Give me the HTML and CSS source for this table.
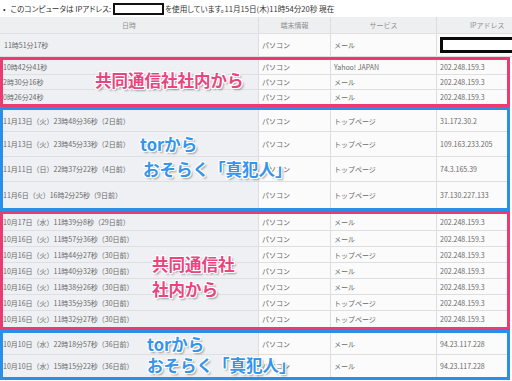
FILE: index.html
```html
<!DOCTYPE html>
<html lang="ja">
<head>
<meta charset="utf-8">
<title>アクセス履歴</title>
<link rel="stylesheet" href="styles.css">
</head>
<body>
<div class="page">
  <div class="notice">
    <span class="bullet">•</span>
    <span>このコンピュータは IPアドレス:</span>
    <span class="mask"></span>
    <span>を使用しています。11月15日(木)11時54分20秒 現在</span>
  </div>

  <div class="table">
    <div class="row head">
      <div class="c d">日時</div><div class="c">端末情報</div><div class="c">サービス</div><div class="c ipc">IPアドレス</div>
    </div>
    <div class="row h23">
      <div class="c d">11時51分17秒</div><div class="c">パソコン</div><div class="c">メール</div><div class="c"><span class="ipmask"></span></div>
    </div>

    <div class="group pink">
      <div class="row h15"><div class="c d">10時42分41秒</div><div class="c">パソコン</div><div class="c">Yahoo! JAPAN</div><div class="c">202.248.159.3</div></div>
      <div class="row h15"><div class="c d">2時30分16秒</div><div class="c">パソコン</div><div class="c">メール</div><div class="c">202.248.159.3</div></div>
      <div class="row h14 last"><div class="c d">0時26分24秒</div><div class="c">パソコン</div><div class="c">メール</div><div class="c">202.248.159.3</div></div>
      <div class="note pk n1">共同通信社社内から</div>
    </div>

    <div class="group blue">
      <div class="row h22"><div class="c d">11月13日（火）23時48分36秒（2日前）</div><div class="c">パソコン</div><div class="c">トップページ</div><div class="c">31.172.30.2</div></div>
      <div class="row h25"><div class="c d">11月13日（火）23時45分33秒（2日前）</div><div class="c">パソコン</div><div class="c">トップページ</div><div class="c">109.163.233.205</div></div>
      <div class="row h25"><div class="c d">11月11日（日）22時37分22秒（4日前）</div><div class="c">パソコン</div><div class="c">トップページ</div><div class="c">74.3.165.39</div></div>
      <div class="row h26 last"><div class="c d">11月6日（火）16時2分25秒（9日前）</div><div class="c">パソコン</div><div class="c">トップページ</div><div class="c">37.130.227.133</div></div>
      <div class="note bl n2">torから</div>
      <div class="note bl n3">おそらく「真犯人」</div>
    </div>

    <div class="group pink">
      <div class="row h17"><div class="c d">10月17日（水）11時39分8秒（29日前）</div><div class="c">パソコン</div><div class="c">メール</div><div class="c">202.248.159.3</div></div>
      <div class="row h16"><div class="c d">10月16日（火）11時57分36秒（30日前）</div><div class="c">パソコン</div><div class="c">メール</div><div class="c">202.248.159.3</div></div>
      <div class="row h16"><div class="c d">10月16日（火）11時44分27秒（30日前）</div><div class="c">パソコン</div><div class="c">トップページ</div><div class="c">202.248.159.3</div></div>
      <div class="row h16"><div class="c d">10月16日（火）11時40分32秒（30日前）</div><div class="c">パソコン</div><div class="c">メール</div><div class="c">202.248.159.3</div></div>
      <div class="row h16"><div class="c d">10月16日（火）11時38分26秒（30日前）</div><div class="c">パソコン</div><div class="c">メール</div><div class="c">202.248.159.3</div></div>
      <div class="row h16"><div class="c d">10月16日（火）11時35分35秒（30日前）</div><div class="c">パソコン</div><div class="c">トップページ</div><div class="c">202.248.159.3</div></div>
      <div class="row h16 last"><div class="c d">10月16日（火）11時32分27秒（30日前）</div><div class="c">パソコン</div><div class="c">トップページ</div><div class="c">202.248.159.3</div></div>
      <div class="note pk n4">共同通信社</div>
      <div class="note pk n5">社内から</div>
    </div>

    <div class="group blue">
      <div class="row h22"><div class="c d">10月10日（水）22時18分57秒（36日前）</div><div class="c">パソコン</div><div class="c">メール</div><div class="c">94.23.117.228</div></div>
      <div class="row h22 last"><div class="c d">10月10日（水）15時15分22秒（36日前）</div><div class="c">パソコン</div><div class="c">メール</div><div class="c">94.23.117.228</div></div>
      <div class="note bl n6">torから</div>
      <div class="note bl n7">おそらく「真犯人」</div>
    </div>
  </div>
</div>
</body>
</html>
```

FILE: styles.css
```css
html, body {
  margin: 0;
  padding: 0;
  background: #ffffff;
}

.page {
  width: 512px;
  height: 381px;
  overflow: hidden;
  font-family: "Noto Sans CJK JP", "Noto Sans", sans-serif;
  font-size: 7px;
  color: #6a6a6a;
}

.notice {
  height: 17px;
  display: flex;
  align-items: center;
  padding-left: 3px;
  font-size: 7.6px;
  color: #333333;
  white-space: nowrap;
  font-feature-settings: "palt";
}

.bullet {
  margin-right: 5px;
}

.mask {
  width: 51px;
  height: 12px;
  box-sizing: border-box;
  border: 2px solid #111111;
  background: #ffffff;
  margin: 0 1px 0 2px;
}

.table {
  width: 512px;
}

.row {
  display: grid;
  grid-template-columns: 258px 72px 106px 98px;
  box-sizing: border-box;
  border-bottom: 1px solid #dedfe1;
}

.group .row {
  grid-template-columns: 255px 72px 106px 98px;
}

.row.last {
  border-bottom: none;
}

.c {
  display: flex;
  align-items: center;
  padding-left: 3px;
  background: #fbfbfb;
  white-space: nowrap;
  overflow: hidden;
}

.c + .c {
  border-left: 1px solid #dcdddf;
}

.c.d {
  background: #eef0f3;
  padding-left: 4px;
}

.group .c.d {
  padding-left: 0;
}

.head {
  height: 17px;
}

.head .c {
  background: #eeeff1;
  justify-content: center;
  padding-left: 0;
  color: #8f8f8f;
}

.head .c.ipc {
  justify-content: flex-start;
  padding-left: 33px;
}

.h14 { height: 14px; }
.h15 { height: 15px; }
.h16 { height: 16px; }
.h17 { height: 17px; }
.h22 { height: 22px; }
.h23 { height: 23px; }
.h25 { height: 25px; }
.h26 { height: 26px; }

.ipmask {
  width: 80px;
  height: 16px;
  box-sizing: border-box;
  border: 3px solid #0a0a0a;
  background: #ffffff;
  flex: none;
}

.group {
  position: relative;
  width: 510px;
  box-sizing: border-box;
  border: 3px solid;
  overflow: hidden;
}

.group.pink {
  border-color: #ec3a72;
}

.group.blue {
  border-color: #2a8fe8;
}

.note {
  position: absolute;
  font-size: 16.5px;
  font-weight: 700;
  line-height: 1;
  white-space: nowrap;
  text-shadow:
    1px 0 0 #fff, -1px 0 0 #fff, 0 1px 0 #fff, 0 -1px 0 #fff,
    1px 1px 0 #fff, -1px -1px 0 #fff, 1px -1px 0 #fff, -1px 1px 0 #fff,
    2px 2px 2px rgba(0, 0, 0, 0.35);
}

.note.pk {
  color: #e9447f;
}

.note.bl {
  color: #3595ea;
}

.n1 { left: 92px; top: 12px; }
.n2 { left: 137px; top: 26px; }
.n3 { left: 140px; top: 51px; }
.n4 { left: 149px; top: 42px; }
.n5 { left: 149px; top: 67px; }
.n6 { left: 144px; top: 3px; }
.n7 { left: 144px; top: 24px; }
```
